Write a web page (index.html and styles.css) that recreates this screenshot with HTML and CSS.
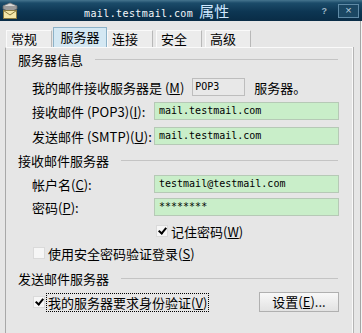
FILE: index.html
```html
<!DOCTYPE html>
<html lang="zh-CN">
<head>
    <meta charset="UTF-8">
    <title>mail.testmail.com 属性</title>
    <link rel="stylesheet" href="styles.css">
</head>
<body>

    <div class="window">
        <div class="titlebar">
            <svg class="app-icon" width="18" height="18" viewBox="0 0 18 18">
                <path d="M2 4 L9 1 L16 4 L9 7 Z" fill="#d8d8d8" stroke="#777" stroke-width="0.8"/>
                <path d="M2 4 L2 7 L9 10 L16 7 L16 4" fill="#9a9a9a" stroke="#666" stroke-width="0.8"/>
                <rect x="2.5" y="8.5" width="13" height="8" fill="#f3e6a8" stroke="#8a7a40"/>
                <path d="M2.5 8.5 L9 13 L15.5 8.5" fill="none" stroke="#8a7a40"/>
            </svg>
            <div class="title"><span class="title-host">mail.testmail.com</span><span class="title-word">属性</span></div>
            <span class="help">?</span>
            <span class="close">×</span>
        </div>

        <div class="content">
            <div class="tabs">
                <div class="tab">常规</div>
                <div class="tab selected">服务器</div>
                <div class="tab">连接</div>
                <div class="tab">安全</div>
                <div class="tab">高级</div>
            </div>

            <div class="panel">
                <div class="section first">
                    <span>服务器信息</span><span class="rule"></span>
                </div>
                <div class="row row-m">
                    <span class="text">我的邮件接收服务器是 (<u>M</u>)</span>
                    <span class="box-gray">POP3</span>
                    <span class="text">服务器。</span>
                </div>
                <div class="row row-i">
                    <span class="label">接收邮件 (POP3)(<u>I</u>):</span>
                    <span class="field">mail.testmail.com</span>
                </div>
                <div class="row row-u">
                    <span class="label">发送邮件 (SMTP)(<u>U</u>):</span>
                    <span class="field">mail.testmail.com</span>
                </div>

                <div class="section sec-2">
                    <span>接收邮件服务器</span><span class="rule"></span>
                </div>
                <div class="row row-c">
                    <span class="label">帐户名(<u>C</u>):</span>
                    <span class="field">testmail@testmail.com</span>
                </div>
                <div class="row row-p">
                    <span class="label">密码(<u>P</u>):</span>
                    <span class="field">********</span>
                </div>
                <div class="row row-w">
                    <span class="check on"></span>
                    <span class="text">记住密码(<u>W</u>)</span>
                </div>
                <div class="row row-s">
                    <span class="check"></span>
                    <span class="text">使用安全密码验证登录(<u>S</u>)</span>
                </div>

                <div class="section sec-3">
                    <span>发送邮件服务器</span><span class="rule"></span>
                </div>
                <div class="row row-v">
                    <span class="check on"></span>
                    <span class="text focus">我的服务器要求身份验证(<u>V</u>)</span>
                    <span class="button">设置(<u>E</u>)...</span>
                </div>
            </div>
        </div>
    </div>

</body>
</html>
```

FILE: styles.css
```css
body {
    margin: 0;
    padding: 0;
    background-color: #e6e6e6;
    font-family: "Noto Sans CJK SC", "Liberation Sans", sans-serif;
    font-size: 13px;
    color: #000;
}
.window {
    width: 362px;
    height: 333px;
    overflow: hidden;
    background-color: #e6e6e6;
    position: relative;
}
/* window frame on the right */
.window::after {
    content: "";
    position: absolute;
    top: 21px;
    right: 1px;
    width: 1px;
    height: 312px;
    background-color: #a4a4a4;
    box-shadow: 1px 0 0 #f4f4f4;
}
.titlebar {
    height: 21px;
    display: flex;
    align-items: center;
    background: linear-gradient(#46758f 0, #1b4b69 3px, #0d3653 55%, #092c46 100%);
    color: white;
}
.app-icon {
    margin-left: 1px;
    flex: none;
}
.title {
    margin-left: 65px;
    flex: 1;
    white-space: nowrap;
}
.title-host {
    font-family: "DejaVu Sans Mono", "Liberation Mono", monospace;
    font-size: 10px;
    letter-spacing: 0.4px;
    color: #f4f8fb;
}
.title-word {
    margin-left: 6px;
    font-size: 15px;
    color: #cfe8ff;
}
.help {
    font-family: "Liberation Sans", sans-serif;
    font-size: 9px;
    font-weight: bold;
    color: #9fb6c6;
    margin-right: 11px;
}
.close {
    width: 19px;
    height: 12px;
    line-height: 11px;
    margin-right: 3px;
    border: 1px solid #5f8aa6;
    text-align: center;
    font-family: "Liberation Sans", sans-serif;
    font-size: 11px;
    color: #b9cfdc;
    background-color: #1b4763;
}
.content {
    padding: 6px 0 0 5px;
}
.tabs {
    display: flex;
    align-items: flex-end;
    height: 20px;
    padding-left: 1px;
}
.tab {
    height: 16px;
    line-height: 16px;
    padding: 0 4px;
    width: 36px;
    margin-right: 3px;
    background-color: #ececec;
    border-top: 1px solid #fafafa;
    border-left: 1px solid #fafafa;
    border-right: 1px solid #b8b8b8;
    font-size: 13px;
}
.tab.selected {
    height: 19px;
    line-height: 17px;
    width: 44px;
    padding: 0 4px;
    margin-left: -2px;
    margin-right: 0;
    background-color: #d4e8f3;
    border: 1px solid #8cb2c8;
    border-bottom: none;
    text-align: center;
}
.panel {
    width: 348px;
    height: 300px;
    box-sizing: border-box;
    border-top: 1px solid #fafafa;
    border-left: 1px solid #a8a8a8;
    border-right: 1px solid #fafafa;
    box-shadow: 1px 0 0 #b4b4b4;
    padding-left: 12px;
}
.section {
    display: flex;
    align-items: center;
    height: 18px;
    padding-right: 14px;
}
.section.first { margin-top: 2px; }
.section.sec-2 { margin-top: 6px; }
.section.sec-3 { margin-top: 7px; }
.rule {
    flex: 1;
    height: 1px;
    margin-left: 12px;
    background-color: #c4c4c4;
}
.row {
    display: flex;
    align-items: center;
    height: 18px;
    padding-left: 14px;
}
.row-m { margin-top: 10px; }
.row-i { margin-top: 6px; }
.row-u { margin-top: 7px; }
.row-c { margin-top: 6px; }
.row-p { margin-top: 5px; }
.row-w { margin-top: 6px; padding-left: 138px; }
.row-s { margin-top: 4px; padding-left: 15px; }
.row-v { margin-top: 5px; padding-left: 15px; height: 20px; }
.label {
    width: 122px;
    flex: none;
    white-space: nowrap;
}
.field {
    width: 185px;
    height: 18px;
    box-sizing: border-box;
    border: 1px solid #b6c9b6;
    background-color: #c9eec9;
    padding-left: 4px;
    font-family: "DejaVu Sans Mono", "Liberation Mono", monospace;
    font-size: 10px;
    line-height: 16px;
}
.box-gray {
    width: 53px;
    height: 18px;
    box-sizing: border-box;
    margin-left: 8px;
    margin-right: 9px;
    border: 1px solid #bdbdbd;
    background-color: #e8e8e8;
    padding-left: 2px;
    font-family: "DejaVu Sans Mono", "Liberation Mono", monospace;
    font-size: 10px;
    line-height: 16px;
}
.text {
    white-space: nowrap;
}
.check {
    width: 12px;
    height: 12px;
    flex: none;
    box-sizing: border-box;
    border: 1px solid #dadada;
    background-color: #f6f6f6;
    margin-right: 3px;
    position: relative;
}
.check.on::after {
    content: "";
    position: absolute;
    left: 3px;
    top: 0px;
    width: 3px;
    height: 6px;
    border-right: 2px solid #000;
    border-bottom: 2px solid #000;
    transform: rotate(40deg);
}
.focus {
    outline: 1px dotted #000;
    outline-offset: 1px;
    line-height: 15px;
}
.button {
    margin-left: auto;
    margin-right: 13px;
    width: 80px;
    height: 20px;
    box-sizing: border-box;
    text-align: center;
    line-height: 18px;
    border: 1px solid #b0b0b0;
    background: linear-gradient(#f8f8f8, #e2e2e2);
}
```
